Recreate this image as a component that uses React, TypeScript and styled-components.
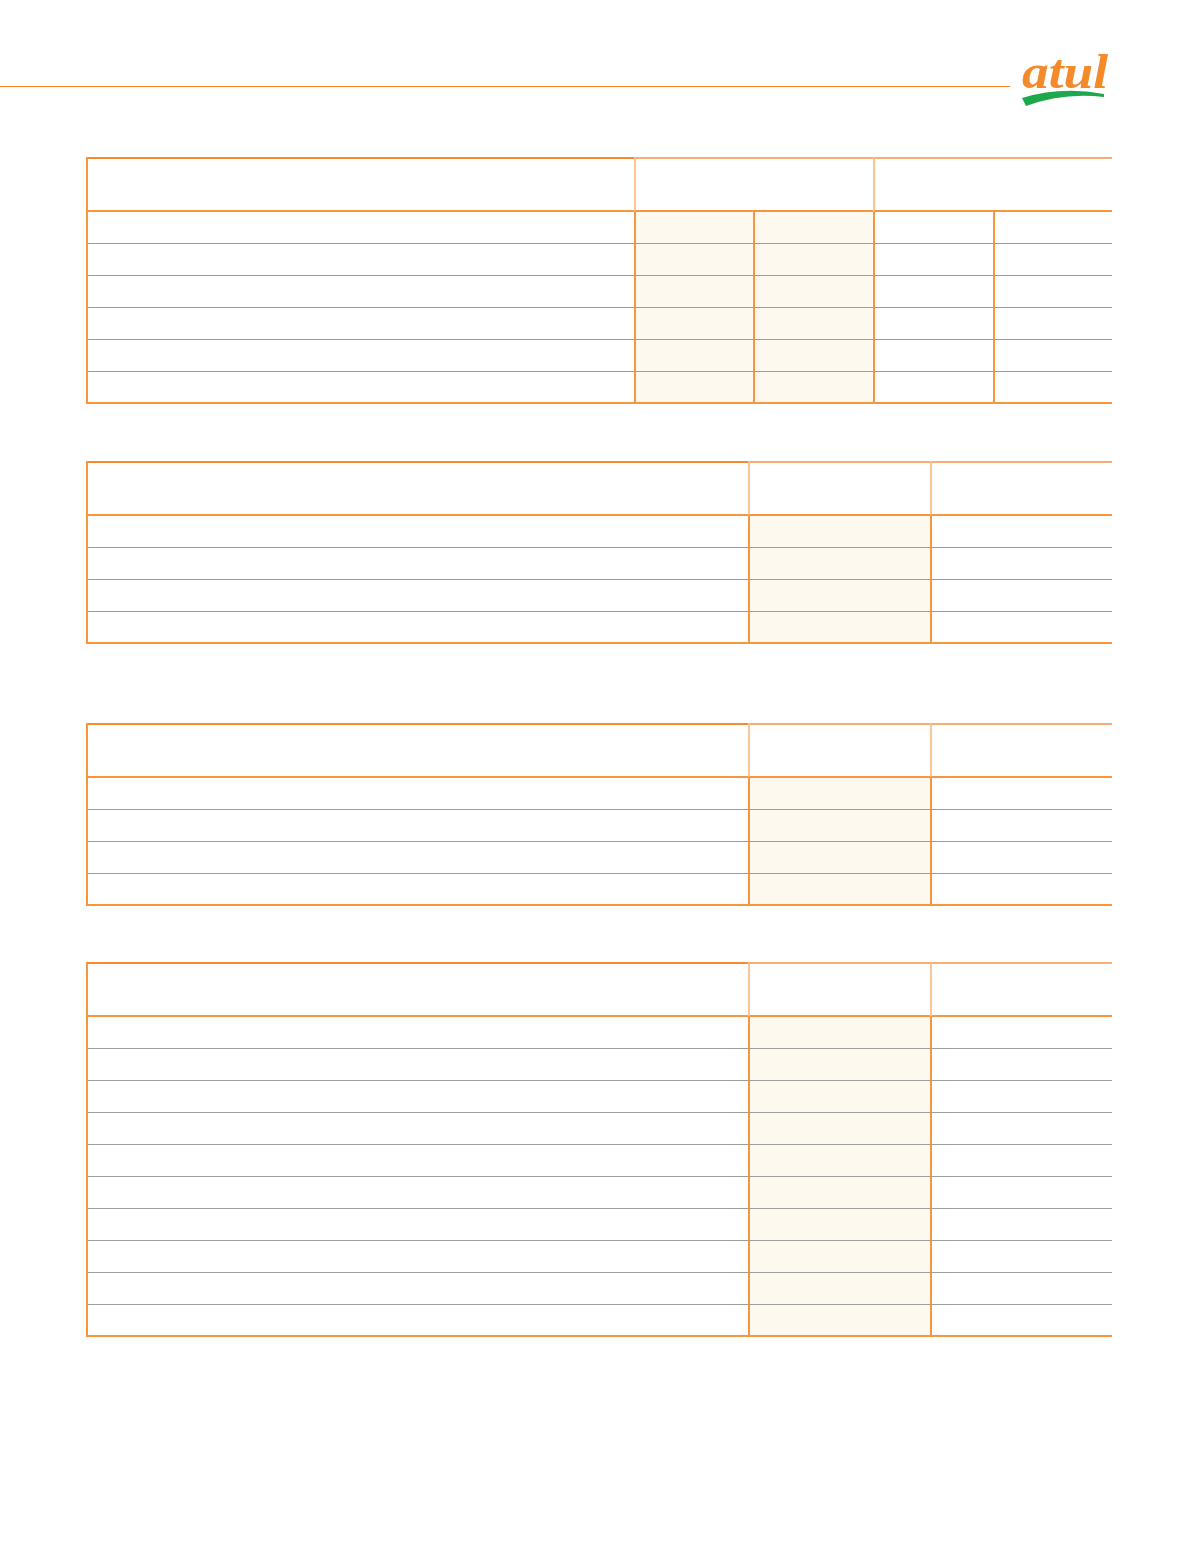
import React from 'react'
import styled, { createGlobalStyle } from 'styled-components'

const ORANGE = '#f7963f'
const LIGHT = '#fcc597'
const GRAY = '#9d9d9d'
const CREAM = '#fef9ee'

const GlobalStyle = createGlobalStyle`
  *, *::before, *::after { box-sizing: border-box; }
  body {
    margin: 0;
    background: #ffffff;
    font-family: 'Liberation Sans', Arial, sans-serif;
  }
`

const Page = styled.div`
  width: 1196px;
  min-height: 1555px;
  background: #ffffff;
`

const Header = styled.header`
  display: flex;
  align-items: flex-start;
  height: 110px;
  padding-top: 46px;
`

const Rule = styled.div`
  flex: 0 0 1010px;
  height: 1px;
  margin-top: 40px;
  background: #f58220;
`

const LogoBox = styled.div`
  margin-left: 5px;
  width: 98px;
  height: 62px;
`

const Content = styled.main`
  padding: 47px 0 0 86px;
`

const Table = styled.table<{ $gap: number }>`
  width: 1026px;
  table-layout: fixed;
  border-collapse: separate;
  border-spacing: 0;
  border-left: 2px solid ${ORANGE};
  margin-top: ${(p) => p.$gap}px;
`

const Col = styled.col<{ $w: number }>`
  width: ${(p) => p.$w}px;
`

const Th = styled.th<{ $first?: boolean }>`
  height: 55px;
  padding: 0;
  border-top: 2px solid ${(p) => (p.$first ? '#f58a2f' : '#f9ad72')};
  border-bottom: 2px solid ${ORANGE};
  border-left: ${(p) => (p.$first ? 'none' : `2px solid ${LIGHT}`)};
  background: #ffffff;
`

const Row = styled.tr`
  &:last-child td {
    border-bottom: 2px solid ${ORANGE};
  }
`

const Td = styled.td<{ $first?: boolean; $shade?: boolean }>`
  height: 32px;
  padding: 0;
  border-bottom: 1px solid ${GRAY};
  border-left: ${(p) => (p.$first ? 'none' : `2px solid ${ORANGE}`)};
  background: ${(p) => (p.$shade ? CREAM : '#ffffff')};
`

const Logo = () => (
  <svg width="98" height="62" viewBox="0 0 98 62" overflow="visible">
    <text
      x="7"
      y="42"
      fontFamily="'Liberation Serif', serif"
      fontStyle="italic"
      fontWeight="bold"
      fontSize="48"
      fill="#f58a2a"
      textLength="86"
      lengthAdjust="spacingAndGlyphs"
    >
      atul
    </text>
    <path d="M7 52 Q46 40 89 48 L89 51 Q49 46 11 60 Z" fill="#1da84b" />
  </svg>
)

const Wide = ({ rows, gap }: { rows: number; gap: number }) => (
  <Table $gap={gap}>
    <colgroup>
      <Col $w={546} />
      <Col $w={119} />
      <Col $w={120} />
      <Col $w={120} />
      <Col $w={119} />
    </colgroup>
    <thead>
      <tr>
        <Th $first />
        <Th colSpan={2} />
        <Th colSpan={2} />
      </tr>
    </thead>
    <tbody>
      {Array.from({ length: rows }).map((_, i) => (
        <Row key={i}>
          <Td $first />
          <Td $shade />
          <Td $shade />
          <Td />
          <Td />
        </Row>
      ))}
    </tbody>
  </Table>
)

const Narrow = ({ rows, gap }: { rows: number; gap: number }) => (
  <Table $gap={gap}>
    <colgroup>
      <Col $w={660} />
      <Col $w={182} />
      <Col $w={182} />
    </colgroup>
    <thead>
      <tr>
        <Th $first />
        <Th />
        <Th />
      </tr>
    </thead>
    <tbody>
      {Array.from({ length: rows }).map((_, i) => (
        <Row key={i}>
          <Td $first />
          <Td $shade />
          <Td />
        </Row>
      ))}
    </tbody>
  </Table>
)

export default function App() {
  return (
    <Page>
      <GlobalStyle />
      <Header>
        <Rule />
        <LogoBox>
          <Logo />
        </LogoBox>
      </Header>
      <Content>
        <Wide rows={6} gap={0} />
        <Narrow rows={4} gap={57} />
        <Narrow rows={4} gap={79} />
        <Narrow rows={10} gap={56} />
      </Content>
    </Page>
  )
}
